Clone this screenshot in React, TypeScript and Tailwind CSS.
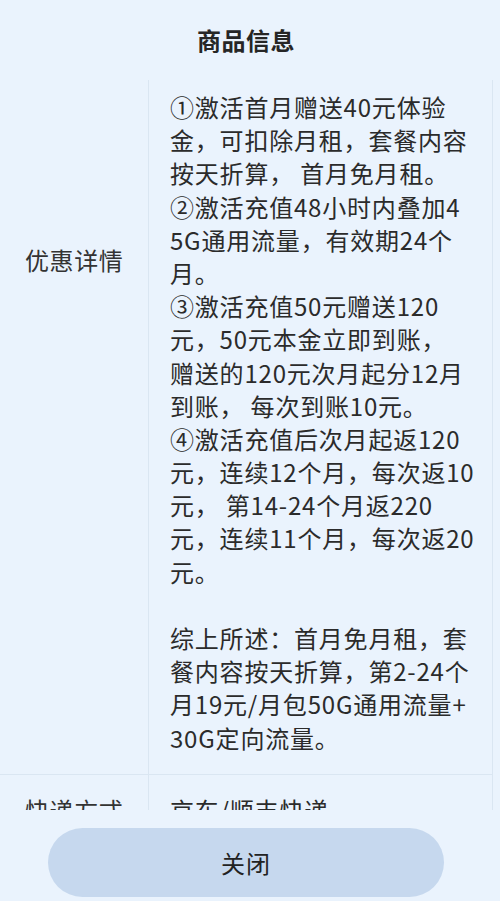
const lines = [
  "①激活首月赠送40元体验",
  "金，可扣除月租，套餐内容",
  "按天折算， 首月免月租。",
  "②激活充值48小时内叠加4",
  "5G通用流量，有效期24个",
  "月。",
  "③激活充值50元赠送120",
  "元，50元本金立即到账，",
  "赠送的120元次月起分12月",
  "到账， 每次到账10元。",
  "④激活充值后次月起返120",
  "元，连续12个月，每次返10",
  "元， 第14-24个月返220",
  "元，连续11个月，每次返20",
  "元。",
  "",
  "综上所述：首月免月租，套",
  "餐内容按天折算，第2-24个",
  "月19元/月包50G通用流量+",
  "30G定向流量。",
];

export default function App() {
  return (
    <div
      className="w-[500px] h-[901px] bg-[#eaf3fd] flex flex-col overflow-hidden text-[#2b2b2b]"
      style={{ fontFamily: '"Noto Sans CJK SC", "Noto Sans", sans-serif' }}
    >
      {/* Title */}
      <div className="h-[80px] flex items-center justify-center pr-[8px]">
        <h1 className="text-[24px] font-bold tracking-[0.5px] text-[#262626]">商品信息</h1>
      </div>

      {/* Table (scrolled) */}
      <div className="h-[730px] overflow-hidden mr-[7px] border-r border-[#dae6f2]">
        <div className="flex border-b border-[#dae6f2]">
          <div className="w-[149px] shrink-0 border-r border-[#dae6f2] pl-[25px] pt-[163px] text-[24px] leading-[33px] tracking-[0.6px] text-[#333]">
            优惠详情
          </div>
          <div className="flex-1 pl-[21px] pt-[10px] pb-[20px] text-[24px] leading-[33.2px] tracking-[0.8px]">
            {lines.map((l, i) => (
              <div key={i} className="whitespace-nowrap h-[33.2px]">
                {l}
              </div>
            ))}
          </div>
        </div>
        <div className="flex">
          <div className="w-[149px] shrink-0 border-r border-[#dae6f2] pl-[25px] pt-[18px] text-[24px] leading-[33px] tracking-[0.6px] text-[#333]">
            快递方式
          </div>
          <div className="flex-1 pl-[21px] pt-[18px] pb-[20px] text-[24px] leading-[33px] tracking-[0.8px]">
            京东/顺丰快递
          </div>
        </div>
      </div>

      {/* Close button */}
      <div className="flex-1 flex items-start pl-[48px] pt-[18px]">
        <button className="w-[396px] h-[69px] rounded-full bg-[#c6d8ee] text-[24px] text-[#222] tracking-[1px]">
          关闭
        </button>
      </div>
    </div>
  );
}
